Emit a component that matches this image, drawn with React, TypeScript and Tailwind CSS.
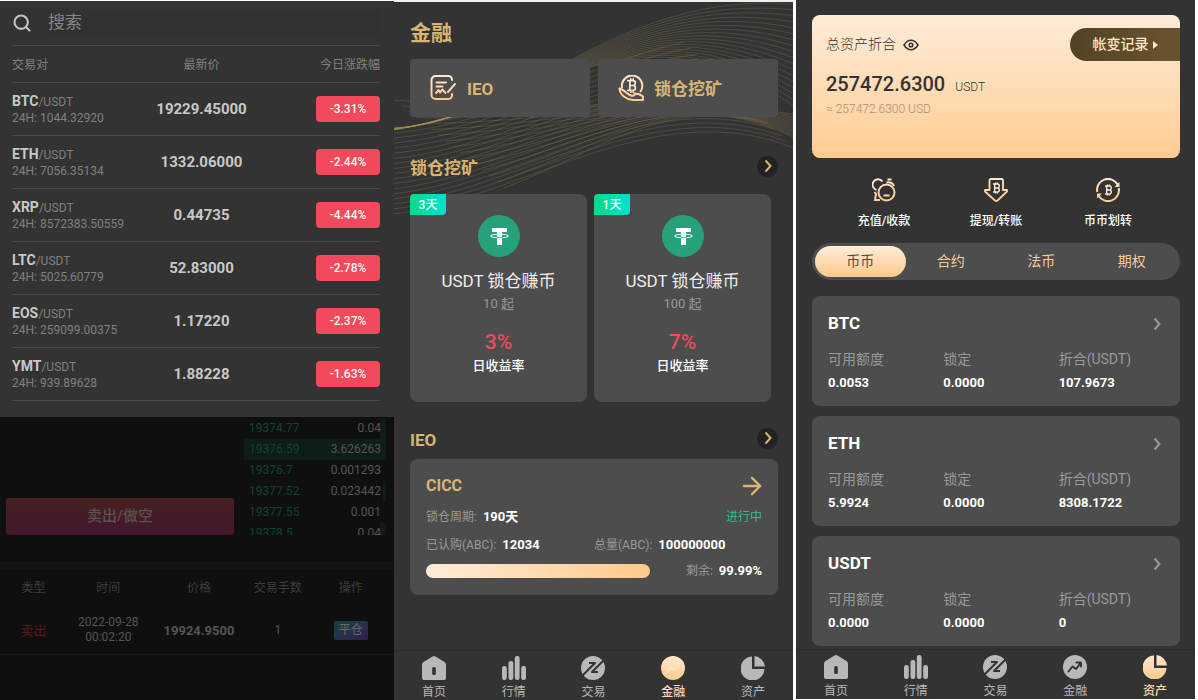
import React from 'react';
import { ArrowRight, Search } from 'lucide-react';

interface Market {
    base: string;
    volume: string;
    price: string;
    change: string;
}

const markets: Market[] = [
    { base: 'BTC', volume: '1044.32920', price: '19229.45000', change: '-3.31%' },
    { base: 'ETH', volume: '7056.35134', price: '1332.06000', change: '-2.44%' },
    { base: 'XRP', volume: '8572383.50559', price: '0.44735', change: '-4.44%' },
    { base: 'LTC', volume: '5025.60779', price: '52.83000', change: '-2.78%' },
    { base: 'EOS', volume: '259099.00375', price: '1.17220', change: '-2.37%' },
    { base: 'YMT', volume: '939.89628', price: '1.88228', change: '-1.63%' },
];

const orderBook = [
    { price: '19374.77', amount: '0.04', depth: 4 },
    { price: '19376.59', amount: '3.626263', depth: 100 },
    { price: '19376.7', amount: '0.001293', depth: 0 },
    { price: '19377.52', amount: '0.023442', depth: 2 },
    { price: '19377.55', amount: '0.001', depth: 0 },
    { price: '19378.5', amount: '0.04', depth: 4 },
];

const products = [
    { days: '3天', min: '10 起', rate: '3%' },
    { days: '1天', min: '100 起', rate: '7%' },
];

const assets = [
    { coin: 'BTC', available: '0.0053', locked: '0.0000', total: '107.9673' },
    { coin: 'ETH', available: '5.9924', locked: '0.0000', total: '8308.1722' },
    { coin: 'USDT', available: '0.0000', locked: '0.0000', total: '0' },
];

const PEACH = 'url(#peach)';

// Bitcoin sign shared by the peach icons, centred on 0,0
const BitcoinMark: React.FC = () => (
    <path
        d="M-3.5 -4H0.8a2 2 0 0 1 0 4H-1.8M0.8 0a2 2 0 0 1 0 4H-3.5M-1.8 -4V4M-1 -5.6V-4M1 -5.6V-4M-1 4V5.6M1 4V5.6"
        fill="none"
        stroke={PEACH}
        strokeWidth="1.4"
    />
);

const IeoIcon: React.FC = () => (
    <svg viewBox="0 0 26 26" className="size-[26px]" fill="none" stroke={PEACH} strokeWidth="2" strokeLinecap="round" strokeLinejoin="round">
        <path d="M22 5V4.500a3.500 3.500 0 0 0-3.500-3.500H5.500A4 4 0 0 0 1.500 5V20A4 4 0 0 0 5.500 24H18a4 4 0 0 0 4-3.500V19" />
        <path d="M6.500 7.500H16M6.500 11.500H12.500M25 9L18 17" />
        <path d="M6 18L8.500 15L10 17.500L12.500 14.500L15.500 18" />
    </svg>
);

const MiningIcon: React.FC = () => (
    <svg viewBox="0 0 26 26" className="size-[26px]" fill="none" stroke={PEACH} strokeWidth="2" strokeLinecap="round" strokeLinejoin="round">
        <path d="M4 12.500A10.200 10.200 0 1 1 22.500 16.500" />
        <g transform="translate(14 10.500) scale(1.2)">
            <BitcoinMark />
        </g>
        <path d="M1.500 13.500C2 20 8 24.500 15 25H25V21.500C22 19 20 18.500 16.500 18.500C18 20.500 15 21.500 12 20C8 18 5 14 1.500 13.500Z" />
    </svg>
);

const DepositIcon: React.FC = () => (
    <svg viewBox="0 0 24 24" className="size-6" fill="none" stroke={PEACH} strokeWidth="2">
        <circle cx="14.500" cy="14.500" r="8" />
        <path d="M11.500 17.500H17.500M4.500 12A5.500 5.500 0 1 1 10.500 3.500M14.500 4.500A6 6 0 0 1 22 8M15.500 1.500H19.500M2.500 14L4 16L3 22H8" />
    </svg>
);

const WithdrawIcon: React.FC = () => (
    <svg viewBox="0 0 24 24" className="size-6" fill="none" stroke={PEACH} strokeWidth="1.8" strokeLinejoin="round">
        <path d="M5.500 12V2.500Q5.500 1 7 1H17.500Q19 1 19 2.500V12H23V13.500L13.500 22.500Q12.300 23.500 11 22.500L1 13.500V12Z" />
        <g transform="translate(12.500 10)">
            <BitcoinMark />
        </g>
    </svg>
);

const TransferIcon: React.FC = () => (
    <svg viewBox="0 0 24 24" className="size-6" fill="none" stroke={PEACH} strokeWidth="2">
        <path d="M1.300 14A10.900 10.900 0 0 1 21.500 6.500M22.700 10A10.900 10.900 0 0 1 2.500 17.500" />
        <path d="M23.500 4V9H18.500ZM1 20.500V15.500H6Z" fill={PEACH} stroke="none" />
        <g transform="translate(12.500 12)">
            <BitcoinMark />
        </g>
    </svg>
);

const TetherIcon: React.FC = () => (
    <svg viewBox="0 0 42 42" className="size-[42px]">
        <circle cx="21" cy="21" r="21" fill="#26a17b" />
        <ellipse cx="21.500" cy="21" rx="9" ry="1.800" fill="none" stroke="#fff" strokeWidth="1" />
        <path d="M14 13H29V17H24V30H19V17H14Z" fill="#fff" />
        <path d="M18.500 22.300Q21.500 22.700 24.500 22.300" fill="none" stroke="#26a17b" strokeWidth="0.8" />
    </svg>
);

const EyeIcon: React.FC = () => (
    <svg viewBox="0 0 16 12" className="h-3 w-4" fill="none" stroke="#333" strokeWidth="1.500">
        <path d="M1 6Q4 1.200 8 1.200T15 6Q12 10.800 8 10.800T1 6Z" />
        <circle cx="8" cy="6" r="1.800" />
    </svg>
);

const Chevron: React.FC = () => (
    <svg viewBox="0 0 8 14" className="h-[14px] w-2" fill="none" stroke="currentColor" strokeWidth="2">
        <path d="M1.500 1.500L6.500 7L1.500 12.500" />
    </svg>
);

const navItems: { label: string; icon: (fill: string, cut: string) => React.ReactNode }[] = [
    {
        label: '首页',
        icon: (fill, cut) => (
            <>
                <path d="M10.500 0.500Q12 -0.500 13.500 0.500L22.500 6Q24 7 24 8.500V22Q24 24 22 24H2Q0 24 0 22V8.500Q0 7 1.500 6Z" fill={fill} />
                <rect x="10.200" y="11" width="3.600" height="8" rx="1.500" fill={cut} />
            </>
        ),
    },
    {
        label: '行情',
        icon: fill => (
            <>
                <rect x="0" y="10" width="4.800" height="14" rx="2.200" fill={fill} />
                <rect x="6.500" y="5" width="4.800" height="19" rx="2.200" fill={fill} />
                <rect x="12.800" y="0" width="4.800" height="24" rx="2.200" fill={fill} />
                <rect x="19.200" y="10" width="4.800" height="14" rx="2.200" fill={fill} />
            </>
        ),
    },
    {
        label: '交易',
        icon: (fill, cut) => (
            <>
                <circle cx="12" cy="12" r="12" fill={fill} />
                <path d="M1.500 19.500L14 7H8M22.500 4.500L11 16H17" fill="none" stroke={cut} strokeWidth="2" strokeLinejoin="round" />
            </>
        ),
    },
    {
        label: '金融',
        icon: (fill, cut) => (
            <>
                <circle cx="12" cy="12" r="12" fill={fill} />
                <path d="M5.500 16.500L9.500 11.500L13 14L18 7.500M13.500 7.500H18V11.500" fill="none" stroke={cut} strokeWidth="2" strokeLinecap="round" strokeLinejoin="round" />
            </>
        ),
    },
    {
        label: '资产',
        icon: fill => (
            <>
                <path d="M11 0.500V13H23.500A12 12 0 1 1 11 0.500Z" fill={fill} />
                <path d="M13.500 0A12 12 0 0 1 24 10.500H13.500Z" fill={fill} />
            </>
        ),
    },
];

const TabBar: React.FC<{ active: string }> = ({ active }) => (
    <nav className="mt-auto grid grid-cols-5 border-t border-[#2b2b2b] pt-[5px]">
        {navItems.map(item => {
            const on = item.label === active;
            // the finance arrow fades into the peach disc when selected
            const cut = on ? '#ffe3c6' : '#333333';
            return (
                <a
                    key={item.label}
                    href="#"
                    className={on ? 'flex flex-col items-center gap-1 text-[12px] leading-4 font-medium text-[#ffd9ae]' : 'flex flex-col items-center gap-1 text-[12px] leading-4 text-[#b8b8b8]'}
                >
                    <svg viewBox="0 0 24 24" className="size-6">
                        {item.icon(on ? PEACH : '#b8b8b8', cut)}
                    </svg>
                    {item.label}
                </a>
            );
        })}
    </nav>
);

// Each band blends from one cubic curve to another: [x0, y0, x1, y1, x2, y2, x3, y3]
const bands: { from: number[]; to: number[]; count: number }[] = [
    { from: [0, 126, 120, 122, 220, -12, 400, 2], to: [0, 128, 160, 100, 240, -6, 400, 104], count: 18 },
    { from: [0, 98, 140, 112, 260, 92, 400, 112], to: [110, 186, 210, 148, 290, 78, 400, 136], count: 16 },
    { from: [0, 126, 110, 116, 200, 60, 290, 40], to: [0, 212, 130, 196, 260, 90, 400, 146], count: 18 },
];

const Waves: React.FC = () => (
    <svg viewBox="0 0 399 212" preserveAspectRatio="none" className="absolute inset-x-0 top-0 h-[212px] w-full" fill="none" stroke="#a8935a" strokeOpacity="0.3" strokeWidth="0.8">
        {bands.flatMap((band, b) =>
            Array.from({ length: band.count }, (_, i) => {
                const t = i / (band.count - 1);
                const p = band.from.map((v, k) => (v + (band.to[k] - v) * t).toFixed(1));
                return <path key={`${b}-${i}`} d={`M${p[0]} ${p[1]}C${p[2]} ${p[3]} ${p[4]} ${p[5]} ${p[6]} ${p[7]}`} />;
            })
        )}
    </svg>
);

const MarketPanel: React.FC = () => (
    <section className="flex min-h-screen flex-col bg-[#0f0f0f] pt-px shadow-[inset_0_1px_0_#ffffff]">
        <div className="bg-[#333333] pr-[14px] pb-4 pl-3">
            <label className="flex h-[45px] items-center gap-4 border-b border-[#4a4a4a]">
                <Search className="size-5 text-[#c4c4c4]" strokeWidth={2.5} />
                <input
                    type="search"
                    aria-label="搜索"
                    placeholder="搜索"
                    className="h-6 min-w-0 flex-1 rounded bg-[#313131] text-[17px] text-[#999999] outline-none placeholder:text-[#858585]"
                />
            </label>
            <table className="w-full table-fixed">
                <thead>
                    <tr className="h-9 border-b border-[#4a4a4a] text-[12px] text-[#808080]">
                        <th className="w-[34%] pt-[3px] text-left font-normal">交易对</th>
                        <th className="w-[35%] pt-[3px] text-center font-normal">最新价</th>
                        <th className="w-[31%] pt-[3px] text-right font-normal">今日涨跌幅</th>
                    </tr>
                </thead>
                <tbody>
                    {markets.map(m => (
                        <tr key={m.base} className="h-[53px] border-b border-[#4a4a4a]">
                            <td className="pt-px text-[12px] leading-4 whitespace-nowrap text-[#808080]">
                                <span className="text-[14px] font-bold text-[#c8c8c8]">{m.base}</span>/USDT
                                <div>24H: {m.volume}</div>
                            </td>
                            <td className="pt-px text-center text-[15px] font-bold text-[#c8c8c8]">{m.price}</td>
                            <td>
                                <div className="ml-auto flex h-[26px] w-16 items-center justify-center rounded bg-[#f2495c] text-[12px] font-medium text-[#f5f5f5]">
                                    {m.change}
                                </div>
                            </td>
                        </tr>
                    ))}
                </tbody>
            </table>
        </div>

        {/* Dimmed trading page behind the drawer */}
        <div className="flex items-end gap-[10px] pr-2 pl-[6px]">
            <button className="h-[37px] flex-1 rounded bg-linear-to-b from-[#47201f] to-[#43172f] text-[15px] font-medium text-[#5d5150]">卖出/做空</button>
            <div className="h-[118px] w-[142px] overflow-hidden pt-px text-[12px]">
                {orderBook.map(o => (
                    <div key={o.price} className="relative flex h-[21px] items-center justify-between px-[5px]">
                        <div className="absolute inset-y-0 right-0 bg-[#0e1d18]" style={{ width: `${o.depth}%` }}></div>
                        <span className="relative text-[#10442f]">{o.price}</span>
                        <span className="relative text-[#555555]">{o.amount}</span>
                    </div>
                ))}
            </div>
        </div>
        <div className="mt-[26px] h-2 bg-[#131313]"></div>
        <table className="w-full table-fixed text-center text-[12px] text-[#555555]">
            <thead>
                <tr className="h-[38px] text-[#3d3d3d]">
                    <th className="w-[17%] font-normal">类型</th>
                    <th className="w-[21%] font-normal">时间</th>
                    <th className="w-[25%] font-normal">价格</th>
                    <th className="w-[15%] font-normal">交易手数</th>
                    <th className="w-[22%] font-normal">操作</th>
                </tr>
            </thead>
            <tbody>
                <tr className="h-12 border-b border-[#1a1a1a]">
                    <td className="text-[13px] text-[#5c1a20]">卖出</td>
                    <td className="leading-[15px]">2022-09-28<br />00:02:20</td>
                    <td className="text-[13px] font-bold">19924.9500</td>
                    <td>1</td>
                    <td>
                        <button className="h-[19px] w-[34px] rounded-xs bg-linear-to-br from-[#0d4340] to-[#301a52] text-[12px] leading-none text-[#686868]">平仓</button>
                    </td>
                </tr>
            </tbody>
        </table>
    </section>
);

const SectionHeading: React.FC<{ title: string }> = ({ title }) => (
    <div className="flex h-[22px] items-center justify-between">
        <h2 className="pt-[3px] text-[17px] leading-[22px] font-bold">{title}</h2>
        <button aria-label={title} className="flex size-[21px] items-center justify-center rounded-full bg-[#222222]">
            <Chevron />
        </button>
    </div>
);

const FinancePanel: React.FC = () => (
    <section className="relative flex min-h-screen flex-col border-t-2 border-[#f0f0f0] bg-[#333333] text-[#d8b574]">
        <Waves />
        <div className="relative pt-[17px] pr-[15px] pl-4">
            <h1 className="text-[21px] leading-7 font-bold">金融</h1>
            <div className="mt-3 grid grid-cols-2 gap-2">
                <a href="#" className="flex h-[58px] items-center gap-[11px] rounded bg-[#4d4d4d] pl-5 text-[17px] font-bold">
                    <IeoIcon />
                    <span className="pt-[3px]">IEO</span>
                </a>
                <a href="#" className="flex h-[58px] items-center gap-[10px] rounded bg-[#4d4d4d] pl-5 text-[17px] font-bold">
                    <MiningIcon />
                    <span className="pt-[3px]">锁仓挖矿</span>
                </a>
            </div>

            <div className="mt-[38px]">
                <SectionHeading title="锁仓挖矿" />
            </div>
            <div className="mt-[17px] grid grid-cols-2 gap-[7px] pr-[7px]">
                {products.map(p => (
                    <article key={p.days} className="relative flex h-[208px] flex-col items-center rounded-lg bg-[#4d4d4d] pt-[21px] text-white">
                        <span className="absolute top-0 left-0 flex h-[21px] w-9 items-center justify-center rounded-tl rounded-br bg-linear-to-r from-[#0ed888] to-[#02e0d0] text-[12px] font-medium">
                            {p.days}
                        </span>
                        <TetherIcon />
                        <h3 className="mt-[13px] text-[17px] leading-[22px] text-[#eeeeee]">USDT 锁仓赚币</h3>
                        <p className="mt-[3px] text-[13px] leading-[18px] text-[#999999]">{p.min}</p>
                        <p className="mt-[17px] text-[21px] leading-6 font-medium text-[#f2495c]">{p.rate}</p>
                        <p className="mt-[3px] text-[13px] leading-[18px] font-medium">日收益率</p>
                    </article>
                ))}
            </div>

            <div className="mt-[25px]">
                <SectionHeading title="IEO" />
            </div>
            <article className="mt-[10px] rounded-lg bg-[#4d4d4d] px-4 pt-4 pb-[14px] text-[12px] text-[#999999]">
                <div className="flex h-[22px] items-center justify-between text-[#d8b574]">
                    <h3 className="text-[16px] font-bold">CICC</h3>
                    <ArrowRight className="-mr-1 size-7" strokeWidth={2} />
                </div>
                <div className="mt-[10px] flex h-5 items-center justify-between">
                    <p>锁仓周期: <b className="ml-[3px] text-[13px] text-white">190天</b></p>
                    <span className="text-[#2ebd85]">进行中</span>
                </div>
                <div className="mt-2 grid h-5 grid-cols-2 items-center">
                    <p>已认购(ABC): <b className="ml-[3px] text-[13px] text-white">12034</b></p>
                    <p>总量(ABC): <b className="ml-[3px] text-[13px] text-white">100000000</b></p>
                </div>
                <div className="mt-[6px] flex h-5 items-center justify-between">
                    <div className="h-[14px] w-2/3 rounded-full bg-linear-to-r from-[#ffecd8] to-[#ffc98a]"></div>
                    <p>剩余: <b className="ml-[3px] text-[13px] text-white">99.99%</b></p>
                </div>
            </article>
        </div>
        <TabBar active="金融" />
    </section>
);

const AssetPanel: React.FC = () => (
    <section className="flex min-h-screen flex-col border-b border-white bg-[#333333]">
        <div className="pt-[15px] pr-[15px] pb-[3px] pl-4">
            <div className="h-[143px] rounded-lg bg-linear-to-b from-[#ffecd8] to-[#ffcc92] pt-[13px] pl-[14px] text-[#333333]">
                <div className="flex h-[33px] items-center justify-between">
                    <div className="flex items-center gap-[7px] text-[14px] font-light">
                        总资产折合
                        <EyeIcon />
                    </div>
                    <button className="flex h-[33px] w-[110px] items-center justify-center gap-1 rounded-l-full bg-linear-to-r from-[#524326] to-[#6b532f] text-[14px] font-medium text-[#ffe6c8]">
                        帐变记录
                        <svg viewBox="0 0 5 8" className="h-2 w-[5px]">
                            <path d="M0 0L5 4L0 8Z" fill="#ffe6c8" />
                        </svg>
                    </button>
                </div>
                <p className="mt-[9px] flex items-baseline gap-[10px] leading-7">
                    <span className="text-[20px] font-medium">257472.6300</span>
                    <span className="text-[12px] font-light">USDT</span>
                </p>
                <p className="text-[12px] leading-4 font-light text-[#a88f74]">≈ 257472.6300 USD</p>
            </div>

            <div className="grid grid-cols-3 px-4 pt-5 text-[12px] leading-4 font-medium text-white">
                <a href="#" className="flex flex-col items-center gap-[11px]"><DepositIcon />充值/收款</a>
                <a href="#" className="flex flex-col items-center gap-[11px]"><WithdrawIcon />提现/转账</a>
                <a href="#" className="flex flex-col items-center gap-[11px]"><TransferIcon />币币划转</a>
            </div>

            <div className="mt-[14px] grid h-[37px] grid-cols-4 rounded-full bg-[#4d4d4d] p-[3px] text-[14px] text-[#f5cb98]">
                <button className="rounded-full bg-linear-to-b from-[#ffecd8] to-[#ffc98a] text-[#4d4d4d]">币币</button>
                <button>合约</button>
                <button>法币</button>
                <button>期权</button>
            </div>

            <div className="mt-4 flex flex-col gap-[10px]">
                {assets.map(a => (
                    <article key={a.coin} className="h-[110px] rounded-lg bg-[#4d4d4d] pt-[17px] pr-[6px] pl-4 text-white">
                        <div className="flex h-[22px] items-center justify-between pr-[13px]">
                            <h3 className="text-[17px] font-bold">{a.coin}</h3>
                            <span className="text-[#999999]"><Chevron /></span>
                        </div>
                        <dl className="mt-[13px] grid grid-cols-3 leading-[23px]">
                            <div>
                                <dt className="text-[14px] text-[#999999]">可用额度</dt>
                                <dd className="text-[13px] font-bold">{a.available}</dd>
                            </div>
                            <div>
                                <dt className="text-[14px] text-[#999999]">锁定</dt>
                                <dd className="text-[13px] font-bold">{a.locked}</dd>
                            </div>
                            <div>
                                <dt className="text-[14px] text-[#999999]">折合(USDT)</dt>
                                <dd className="text-[13px] font-bold">{a.total}</dd>
                            </div>
                        </dl>
                    </article>
                ))}
            </div>
        </div>
        <TabBar active="资产" />
    </section>
);

const App: React.FC = () => {
    return (
        <main className="grid grid-cols-[394fr_402fr_399fr] bg-white pr-[3px] font-[Roboto,'Noto_Sans_CJK_SC',sans-serif]">
            <svg className="absolute size-0" aria-hidden="true">
                <defs>
                    <linearGradient id="peach" gradientUnits="userSpaceOnUse" x1="0" y1="0" x2="0" y2="24">
                        <stop offset="0" stopColor="#ffe9d2" />
                        <stop offset="1" stopColor="#ffc98a" />
                    </linearGradient>
                </defs>
            </svg>
            <MarketPanel />
            <div className="border-r-[3px] border-white">
                <FinancePanel />
            </div>
            <AssetPanel />
        </main>
    );
};

export default App;
